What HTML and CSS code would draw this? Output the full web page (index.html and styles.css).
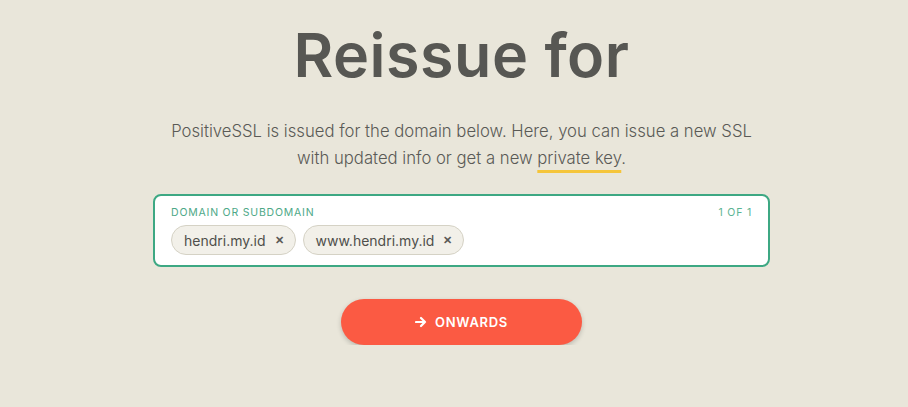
FILE: index.html
```html
<!DOCTYPE html>
<html lang="en">
<head>
<meta charset="UTF-8">
<meta name="viewport" content="width=device-width, initial-scale=1.0">
<title>Reissue</title>
<link rel="stylesheet" href="styles.css">
</head>
<body>
    <div class="page">
        <h1 class="title">Reissue for</h1>
        <p class="intro">PositiveSSL is issued for the domain below. Here, you can issue a new SSL
            with updated info or get a new <span class="mark">private key</span>.</p>

        <div class="field">
            <div class="field-head">
                <span class="label">Domain or subdomain</span>
                <span class="count">1 of 1</span>
            </div>
            <div class="chips">
                <span class="chip">hendri.my.id <span class="x">&#x2715;</span></span>
                <span class="chip">www.hendri.my.id <span class="x">&#x2715;</span></span>
            </div>
        </div>

        <button class="go">
            <svg width="12" height="12" viewBox="0 0 12 12"><path d="M1 6h9M6 2l4 4-4 4" fill="none" stroke="#fff" stroke-width="2.2" stroke-linecap="round" stroke-linejoin="round"/></svg>
            ONWARDS
        </button>
    </div>
</body>
</html>
```

FILE: styles.css
```css
body {
    margin: 0;
    background: #e9e6da;
    font-family: "Inter", "Open Sans", sans-serif;
    color: #555550;
}
.page {
    display: flex;
    flex-direction: column;
    align-items: center;
    padding: 19px 0 0 15px;
}
.title {
    margin: 0;
    font-size: 61px;
    font-weight: 600;
    color: #575753;
    line-height: 72px;
    letter-spacing: 0.5px;
}
.intro {
    margin: 27px 0 0;
    width: 600px;
    text-align: center;
    font-size: 16.7px;
    line-height: 27px;
    color: #5a5a56;
    font-weight: 300;
}
.mark {
    text-decoration: underline;
    text-decoration-color: #f5c53a;
    text-decoration-thickness: 3px;
    text-underline-offset: 6px;
}
.field {
    box-sizing: border-box;
    width: 617px;
    height: 73px;
    margin-top: 22px;
    background: #fff;
    border: 2px solid #3da883;
    border-radius: 8px;
    padding: 10px 16px 0 16px;
}
.field-head {
    display: flex;
    justify-content: space-between;
    font-size: 10.5px;
    letter-spacing: 0.8px;
    color: #4ea887;
    text-transform: uppercase;
    line-height: 14px;
}
.count {
    color: #5bb493;
}
.chips {
    display: flex;
    gap: 7px;
    margin-top: 5px;
}
.chip {
    display: inline-flex;
    align-items: center;
    gap: 9px;
    height: 30px;
    box-sizing: border-box;
    padding: 0 11px 0 12px;
    border: 1px solid #d5d2c5;
    border-radius: 15px;
    background: #f2f0e9;
    font-size: 14px;
    color: #4f4f4b;
}
.x {
    font-size: 11px;
    font-weight: 700;
    color: #5a5a56;
}
.go {
    margin-top: 32px;
    width: 241px;
    height: 46px;
    border: none;
    border-radius: 23px;
    background: #fb5a43;
    color: #fff;
    font-family: inherit;
    font-size: 13px;
    font-weight: 600;
    letter-spacing: 0.7px;
    display: flex;
    align-items: center;
    justify-content: center;
    gap: 8px;
    box-shadow: 0 2px 5px rgba(0,0,0,0.2);
    cursor: pointer;
}
```
